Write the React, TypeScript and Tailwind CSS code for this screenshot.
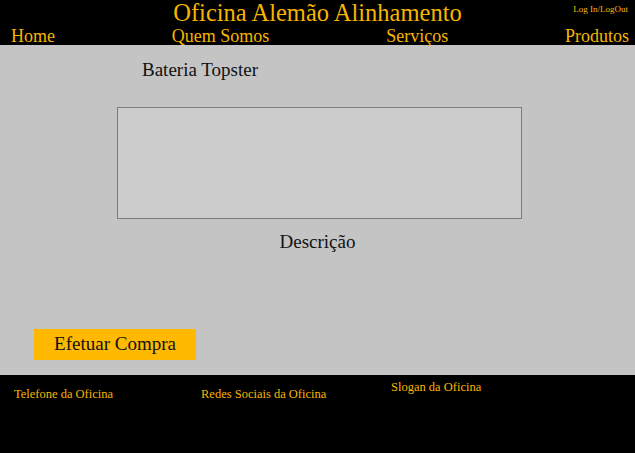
import React from 'react';

const gold = 'text-[#f7b500]';

export default function App() {
    return (
        <div className="flex min-h-[453px] w-full flex-col bg-black font-['Liberation_Serif',serif]">
            {/* header */}
            <header className="relative flex h-[45px] flex-col bg-black px-[6px]">
                <h1 className={`text-center text-[24.5px] leading-[26px] ${gold}`}>Oficina Alemão Alinhamento</h1>
                <a className={`absolute right-[7px] top-[4px] text-[9px] leading-[11px] ${gold}`}>Log In/LogOut</a>
                <nav className={`mt-[1px] flex justify-between pl-[5px] text-[18px] leading-[18px] ${gold}`}>
                    <a>Home</a>
                    <a>Quem Somos</a>
                    <a>Serviços</a>
                    <a>Produtos</a>
                </nav>
            </header>

            {/* produto */}
            <main className="flex h-[330px] flex-col bg-[#c4c4c4] text-[#111]">
                <h2 className="ml-[142px] mt-[15px] text-[19px] leading-[20px]">Bateria Topster</h2>
                <div className="ml-[117px] mt-[27px] h-[112px] w-[405px] border border-[#7c7c7c] bg-[#cccccc]" />
                <p className="mt-[13px] text-center text-[19px] leading-[20px]">Descrição</p>
                <button className="ml-[34px] mt-[77px] h-[31px] w-[162px] bg-[#ffb900] text-[19px] text-[#111]">
                    Efetuar Compra
                </button>
            </main>

            {/* rodape */}
            <footer className={`flex h-[78px] items-start bg-black text-[12.5px] leading-[14px] ${gold}`}>
                <span className="ml-[14px] mt-[12px] w-[187px]">Telefone da Oficina</span>
                <span className="mt-[12px] w-[190px]">Redes Sociais da Oficina</span>
                <span className="mt-[5px]">Slogan da Oficina</span>
            </footer>
        </div>
    );
}
